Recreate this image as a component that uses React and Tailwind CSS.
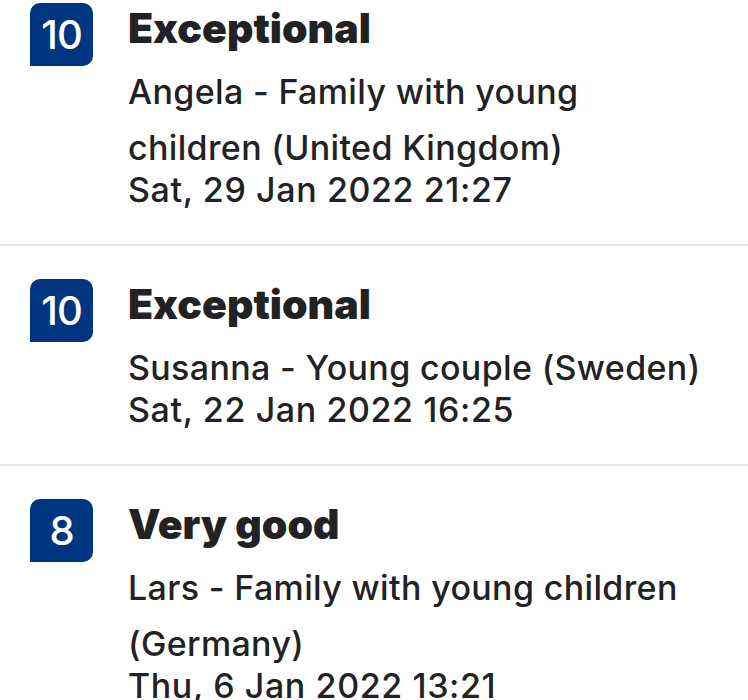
import React from 'react';

const reviews = [
    { score: '10', label: 'Exceptional', lines: ['Angela - Family with young', 'children (United Kingdom)'], date: 'Sat, 29 Jan 2022 21:27' },
    { score: '10', label: 'Exceptional', lines: ['Susanna - Young couple (Sweden)'], date: 'Sat, 22 Jan 2022 16:25' },
    { score: '8', label: 'Very good', lines: ['Lars - Family with young children', '(Germany)'], date: 'Thu, 6 Jan 2022 13:21' },
];

const ScoreBadge = ({ score }) => (
    <div className="w-[63px] h-[63px] shrink-0 bg-[#003580] text-white rounded-t-[10px] rounded-br-[10px] flex items-center justify-center text-[40px] font-medium leading-none tracking-[-1px]">
        {score}
    </div>
);

const App = () => {
    return (
        <div className="w-[748px] h-[700px] overflow-hidden bg-white text-[#222222]" style={{ fontFamily: 'Inter, "Noto Sans", sans-serif' }}>
            {reviews.map((r, i) => (
                <div
                    key={i}
                    className={`flex pl-[30px] pb-[40px] border-b-2 border-[#e6e6e6] ${i === 0 ? 'pt-[3px]' : 'pt-[33px]'}`}
                >
                    <ScoreBadge score={r.score} />
                    <div className="ml-[35px]">
                        <h3 className="text-[41px] font-black leading-[50px] tracking-[0px]">{r.label}</h3>
                        <div className="mt-[11px] text-[34px] font-medium leading-[56px] tracking-[0.35px]">
                            {r.lines.map((l, j) => <div key={j}>{l}</div>)}
                        </div>
                        <p className="text-[34px] font-medium leading-[28px] tracking-[0.6px]">{r.date}</p>
                    </div>
                </div>
            ))}
        </div>
    );
};

export default App;
